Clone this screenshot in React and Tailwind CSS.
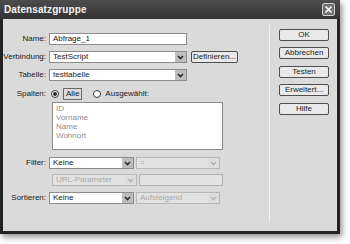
import React from "react";

const font = { fontFamily: '"Liberation Sans", Arial, sans-serif' };

const Chevron = ({ disabled }) => (
  <svg width="7" height="5" viewBox="0 0 7 5">
    <path
      d="M1 1 L3.5 3.5 L6 1"
      fill="none"
      stroke={disabled ? "#b4b4b4" : "#2a2a2a"}
      strokeWidth="1.6"
    />
  </svg>
);

const Select = ({ value, width, disabled }) => (
  <div
    className={`h-[12px] flex items-stretch border ${
      disabled ? "border-[#b8b8b8] bg-[#e2e2e2] text-[#a9a9a9]" : "border-[#8c8c8c] bg-white text-[#1a1a1a]"
    }`}
    style={{ width }}
  >
    <span className="flex-1 pl-[3px] leading-[10px] truncate">{value}</span>
    <span
      className={`w-[11px] flex items-center justify-center ${
        disabled ? "bg-[#dedede]" : "bg-[#bdbdbd]"
      }`}
    >
      <Chevron disabled={disabled} />
    </span>
  </div>
);

const Button = ({ children, className = "" }) => (
  <div
    className={`h-[12px] border border-[#4e4e4e] rounded-[2px] bg-[#e9e9e9] text-[#1e1e1e] text-[8px] leading-[10px] text-center whitespace-nowrap ${className}`}
  >
    {children}
  </div>
);

const Label = ({ children }) => (
  <span className="w-[46px] pr-[3px] text-right text-[#202020] shrink-0">{children}</span>
);

const Radio = ({ checked }) => (
  <span className="w-[8px] h-[8px] rounded-full border border-[#3a3a3a] bg-white flex items-center justify-center">
    {checked && <span className="w-[4px] h-[4px] rounded-full bg-[#2a2a2a]" />}
  </span>
);

export default function App() {
  return (
    <div className="w-[350px] h-[244px] bg-white overflow-hidden text-[8px]" style={font}>
      <div className="w-[340px] h-[234px] bg-[#232323] flex flex-col shadow-[2px_3px_6px_rgba(0,0,0,0.45)]">
        <div className="h-[19px] shrink-0 flex items-center justify-between pl-[4px] pr-[5px] bg-gradient-to-b from-[#4d4d4d] to-[#333333]">
          <span className="text-[10px] font-bold text-[#f2f2f2] tracking-[0.1px]">Datensatzgruppe</span>
          <span className="w-[13px] h-[13px] border border-[#d0d0d0] rounded-[2px] bg-[#707070] flex items-center justify-center">
            <svg width="9" height="9" viewBox="0 0 9 9">
              <path d="M1.5 1.5 L7.5 7.5 M7.5 1.5 L1.5 7.5" stroke="#ffffff" strokeWidth="1.7" />
            </svg>
          </span>
        </div>
        <div className="flex-1 mx-[3px] mb-[3px] bg-[#dadada] flex">
          <div className="w-[266px] flex flex-col pt-[14px]">
            <div className="flex items-center">
              <Label>Name:</Label>
              <div className="w-[138px] h-[12px] border border-[#8c8c8c] bg-white pl-[3px] leading-[10px] text-[#1a1a1a]">
                Abfrage_1
              </div>
            </div>
            <div className="flex items-center mt-[6px]">
              <Label>Verbindung:</Label>
              <Select value="TestScript" width={138} />
              <Button className="w-[47px] ml-[4px]">Definieren...</Button>
            </div>
            <div className="flex items-center mt-[6px]">
              <Label>Tabelle:</Label>
              <Select value="testtabelle" width={138} />
            </div>
            <div className="flex items-center mt-[7px] h-[12px]">
              <Label>Spalten:</Label>
              <span className="ml-[2px]">
                <Radio checked />
              </span>
              <span className="ml-[4px] h-[12px] px-[2px] border border-[#6a6a6a] leading-[10px] text-[#202020]">
                Alle
              </span>
              <span className="ml-[11px]">
                <Radio />
              </span>
              <span className="ml-[4px] text-[#202020]">Ausgewählt:</span>
            </div>
            <div className="flex mt-[2px]">
              <span className="w-[49px] shrink-0" />
              <div className="w-[171px] h-[48px] border border-[#8c8c8c] bg-white pl-[3px] pt-[1px] text-[#8e8e8e] leading-[9px]">
                <div>ID</div>
                <div>Vorname</div>
                <div>Name</div>
                <div>Wohnort</div>
              </div>
            </div>
            <div className="flex items-center mt-[7px]">
              <Label>Filter:</Label>
              <Select value="Keine" width={85} />
              <span className="ml-[2px]">
                <Select value="=" width={84} disabled />
              </span>
            </div>
            <div className="flex items-center mt-[5px]">
              <span className="w-[49px] shrink-0" />
              <Select value="URL-Parameter" width={85} disabled />
              <div className="ml-[2px] w-[84px] h-[12px] border border-[#b0b0b0] bg-[#e2e2e2]" />
            </div>
            <div className="flex items-center mt-[6px]">
              <Label>Sortieren:</Label>
              <Select value="Keine" width={85} />
              <span className="ml-[2px]">
                <Select value="Aufsteigend" width={84} disabled />
              </span>
            </div>
          </div>
          <div className="w-[1px] mt-[6px] h-[197px] bg-[#a8a8a8] border-r border-[#f0f0f0]" />
          <div className="flex flex-col ml-[9px] pt-[10px] w-[50px]">
            <Button>OK</Button>
            <Button className="mt-[6px]">Abbrechen</Button>
            <Button className="mt-[7px]">Testen</Button>
            <Button className="mt-[6px]">Erweitert...</Button>
            <Button className="mt-[7px]">Hilfe</Button>
          </div>
        </div>
      </div>
    </div>
  );
}
